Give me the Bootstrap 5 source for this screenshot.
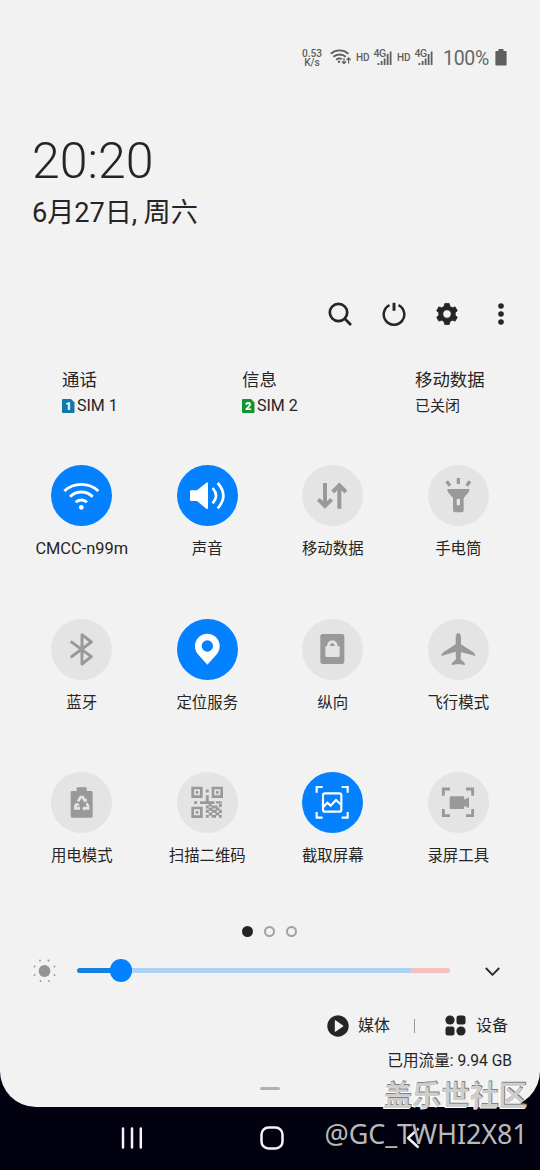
<!DOCTYPE html>
<html lang="zh-CN">
<head>
<meta charset="utf-8">
<meta name="viewport" content="width=device-width, initial-scale=1">
<title>快速设置面板</title>
<link href="https://cdn.jsdelivr.net/npm/bootstrap@5.3.0/dist/css/bootstrap.min.css" rel="stylesheet">
<style>
  body { font-family: Roboto, "Noto Sans CJK SC", sans-serif; background: #02010f; color: #252525; width: 540px; height: 1170px; overflow: hidden; }
  svg { display: block; flex: none; }
  .panel { height: 1107px; background: #f2f2f2; border-radius: 0 0 36px 36px; }
  .status { height: 116px; padding-right: 33px; color: #5e5e5e; fill: #5e5e5e; }
  .speed { font-size: 10.2px; line-height: 9.5px; font-weight: 500; width: 22px; margin-right: 7px; }
  .hd { font-size: 10px; font-weight: 500; line-height: 12px; width: 14px; margin: -1px 3px 0 0; }
  .pct { font-size: 19.5px; line-height: 24px; width: 47px; margin: 2px 5px 0 9px; font-weight: 400; letter-spacing: -.3px; color: #666; }
  .clock { height: 174px; padding: 15px 0 0 32px; }
  .time { font-size: 50px; line-height: 60px; font-weight: 300; }
  .date { font-size: 27.2px; line-height: 34px; margin-top: 5px; letter-spacing: -.1px; }
  .tools { height: 48px; padding-right: 30px; gap: 29.5px; }
  .sims { height: 127px; padding: 31px 0 0 62px; }
  .sims > div:nth-child(1) { width: 180px; }
  .sims > div:nth-child(2) { width: 173px; }
  .sim-name { font-size: 17.4px; line-height: 22px; }
  .sim-val { font-size: 16px; line-height: 22px; margin-top: 4px; gap: 2.5px; }
  .tiles { padding: 0 19px; }
  .tile { height: 153.5px; width: 25%; }
  .knob { width: 61px; height: 61px; border-radius: 50%; background: #e4e4e4; color: #999; --hole: #e4e4e4; }
  .knob.on { background: #0381fe; color: #fff; --hole: #0381fe; }
  .tile-name { font-size: 15.4px; line-height: 22px; margin-top: 12px; white-space: nowrap; }
  .pages { height: 11px; gap: 11px; padding-right: 1px; }
  .pages i { width: 11px; height: 11px; border-radius: 50%; border: 2px solid #a0a0a0; }
  .pages i.now { background: #252525; border-color: #252525; }
  .bright { height: 30px; margin-top: 19px; padding: 0 40px 0 32px; }
  .track { width: 373px; height: 4.6px; margin: 0 35px 0 20px; border-radius: 3px; background: linear-gradient(90deg, #1a80e0 0 43px, #aed0f2 43px 334px, #f3c2be 334px); }
  .thumb { width: 22.5px; height: 22.5px; border-radius: 50%; background: #0381fe; left: 32.5px; top: -9px; }
  .links { height: 24px; margin-top: 28px; padding-right: 32px; font-size: 16px; line-height: 24px; }
  .links span { padding-top: 1px; }
  .rule { width: 1px; height: 14px; background: #999; margin: 0 30px 0 24px; }
  .usage { font-size: 15.6px; line-height: 22px; padding-right: 28px; margin-top: 12.5px; }
  .handle { width: 20px; height: 2.5px; border-radius: 2px; background: #b0b0b0; margin: 15px auto 0; }
  .navbtns { height: 61px; padding-left: 121px; }
  .wm1, .wm2 { position: absolute; white-space: nowrap; }
  .wm1 { left: 383px; top: 1077px; font: bold 28.8px/34px "Noto Sans CJK SC", sans-serif; color: #cdcdcd; text-shadow: 1px -1px 0 #808080, -1px 1px 0 #fff, -1px -1px 1px #fff; }
  .wm2 { left: 324.500px; top: 1117px; font: 27px/34px "Noto Sans", sans-serif; letter-spacing: -.1px; color: #b9b9bd; text-shadow: 1px 1px 1px #000; }
</style>
</head>
<body class="position-relative">
<main class="panel">
  <div class="status d-flex align-items-center justify-content-end">
    <div class="speed text-center">0.53<br>K/s</div>
    <svg width="22" height="18" viewBox="0 0 22 18" class="me-1" fill="none" stroke="#5e5e5e" stroke-width="1.8"><path d="M.8 4.700A13.500 13.500 0 0 1 18.400 4.700M3.400 7.800A9.500 9.500 0 0 1 15.800 7.800M6.200 10.700A5 5 0 0 1 12 10.300"/><circle cx="9" cy="12.800" r="1.200" fill="#5e5e5e" stroke="none"/><path stroke-width="1.200" d="M14 9V14.500M12 12.500L14 14.700L16 12.500M18.600 14.500V9M16.600 11L18.600 8.800L20.600 11"/></svg>
    <div class="hd">HD</div>
    <svg width="20" height="26" viewBox="0 -4 20 26" class="me-1"><text x=".5" y="8" font-size="10.500" font-weight="500" letter-spacing="-.4">4G</text><path d="M4.500 14h1.800v2H4.500zM7.700 12h1.800v4H7.700zM10.700 9.500h1.800v6.500h-1.800zM13.700 5h1.800v11h-1.800zM16.700 2.500h1.800v13.500h-1.800z"/></svg>
    <div class="hd">HD</div>
    <svg width="20" height="26" viewBox="0 -4 20 26"><text x=".5" y="8" font-size="10.500" font-weight="500" letter-spacing="-.4">4G</text><path d="M4.500 14h1.800v2H4.500zM7.700 12h1.800v4H7.700zM10.700 9.500h1.800v6.500h-1.800zM13.700 5h1.800v11h-1.800zM16.700 2.500h1.800v13.500h-1.800z"/></svg>
    <div class="pct">100%</div>
    <svg width="12" height="17" viewBox="0 0 12 17" style="margin-top:-1px"><path d="M3.500 0h5v2H11q.6 0 .6.8V15.500q0 1-.8 1H1.200q-.8 0-.8-1V2.800q0-.8.8-.8h2.300z"/></svg>
  </div>

  <div class="clock">
    <div class="time">20:20</div>
    <div class="date">6月27日, 周六</div>
  </div>

  <div class="tools d-flex align-items-center justify-content-end">
    <svg width="24" height="24" viewBox="0 0 24 24" fill="none" stroke="#252525" stroke-width="2.700"><circle cx="10.500" cy="10.500" r="8.700"/><path d="M16.800 16.800L23 23"/></svg>
    <svg width="24" height="24" viewBox="0 0 24 24" fill="none" stroke="#252525" stroke-width="2.500"><path d="M7.500 3.200A10.300 10.300 0 1 0 16.500 3.200"/><path stroke-width="2.900" d="M12 .8V8.800"/></svg>
    <svg width="24" height="24" viewBox="0 0 24 24" fill="#252525"><path fill-rule="evenodd" stroke="#252525" stroke-width=".8" stroke-linejoin="round" d="M9.800 1.500H14.200L15 4.500L17.200 5.700L20.200 4.900L22.300 8.700L20.200 10.800V13.200L22.300 15.300L20.200 19.100L17.200 18.300L15 19.500L14.200 22.500H9.800L9 19.500L6.800 18.300L3.800 19.100L1.700 15.300L3.800 13.200V10.800L1.700 8.700L3.800 4.900L6.800 5.700L9 4.500ZM12 7.800A4.200 4.200 0 1 0 12 16.200A4.200 4.200 0 1 0 12 7.800Z"/></svg>
    <svg width="24" height="24" viewBox="0 0 24 24" style="margin-right:-2.5px" fill="#252525"><circle cx="12" cy="4" r="2.800"/><circle cx="12" cy="12" r="2.800"/><circle cx="12" cy="20" r="2.800"/></svg>
  </div>

  <div class="sims d-flex">
    <div>
      <div class="sim-name">通话</div>
      <div class="sim-val d-flex align-items-center"><svg width="12.500" height="14" viewBox="0 0 12.500 14" style="margin-top:-1px"><path fill="#0f78ad" d="M1 0H9L12.500 3.500V13Q12.500 14 11.500 14H1Q0 14 0 13V1Q0 0 1 0Z"/><text x="3.200" y="11" font-size="11" font-weight="900" fill="#fff">1</text></svg>SIM 1</div>
    </div>
    <div>
      <div class="sim-name">信息</div>
      <div class="sim-val d-flex align-items-center"><svg width="12.500" height="14" viewBox="0 0 12.500 14" style="margin-top:-1px"><path fill="#159230" d="M1 0H9L12.500 3.500V13Q12.500 14 11.500 14H1Q0 14 0 13V1Q0 0 1 0Z"/><text x="3" y="11" font-size="11" font-weight="900" fill="#fff">2</text></svg>SIM 2</div>
    </div>
    <div>
      <div class="sim-name">移动数据</div>
      <div class="sim-val" style="font-size:15px">已关闭</div>
    </div>
  </div>

  <div class="tiles d-flex flex-wrap">
    <div class="tile d-flex flex-column align-items-center">
      <svg class="knob on" viewBox="0 0 183 183" fill="none" stroke="currentColor" stroke-width="8.500"><path d="M40 78A76 76 0 0 1 142 78M57 95A48 48 0 0 1 125 95M74 112A24 24 0 0 1 108 112"/><circle cx="91" cy="127" r="7" fill="currentColor" stroke="none"/></svg>
      <div class="tile-name" style="font-size:16.4px">CMCC-n99m</div>
    </div>
    <div class="tile d-flex flex-column align-items-center">
      <svg class="knob on" viewBox="0 0 183 183"><path fill="currentColor" d="M42 76H60L88 53Q93 50 93 56V128Q93 134 88 131L60 108H42Q39 108 39 105V79Q39 76 42 76Z"/><path fill="none" stroke="currentColor" stroke-width="8" d="M107 69Q127 92 107 115M122 54Q156 92 122 130"/></svg>
      <div class="tile-name">声音</div>
    </div>
    <div class="tile d-flex flex-column align-items-center">
      <svg class="knob" viewBox="0 0 183 183" fill="none" stroke="currentColor" stroke-width="12"><path d="M69 54V122M49 103L69 123L89 103M112 131V62M92 81L112 61L132 81"/></svg>
      <div class="tile-name">移动数据</div>
    </div>
    <div class="tile d-flex flex-column align-items-center">
      <svg class="knob" viewBox="0 0 183 183"><path fill="currentColor" d="M60 72H122Q124 72 124 75Q124 80 120 84L107 99V136Q107 142 101 142H81Q75 142 75 136V99L62 84Q58 80 58 75Q58 72 60 72Z"/><path fill="var(--hole)" d="M86 102H96V121H86Z"/><path stroke="currentColor" stroke-width="9.500" d="M91 39V57M56 49L66 62M126 49L116 62"/></svg>
      <div class="tile-name">手电筒</div>
    </div>
    <div class="tile d-flex flex-column align-items-center">
      <svg class="knob" viewBox="0 0 183 183" fill="none" stroke="currentColor" stroke-width="9" stroke-linejoin="round"><path d="M59 67L121 113L93 135V47L121 69L59 115"/></svg>
      <div class="tile-name">蓝牙</div>
    </div>
    <div class="tile d-flex flex-column align-items-center">
      <svg class="knob on" viewBox="0 0 183 183"><path fill="currentColor" fill-rule="evenodd" d="M91 137L64 107C56 98 54 90 54 81A37 37 0 0 1 128 81C128 90 126 98 118 107ZM91 64A17 17 0 1 0 91 98A17 17 0 1 0 91 64Z"/></svg>
      <div class="tile-name">定位服务</div>
    </div>
    <div class="tile d-flex flex-column align-items-center">
      <svg class="knob" viewBox="0 0 183 183"><rect x="55" y="45" width="72" height="90" rx="7" fill="currentColor"/><rect x="70" y="81" width="43" height="33" rx="4" fill="var(--hole)"/><path fill="none" stroke="var(--hole)" stroke-width="9" d="M80 84V79A11 11 0 0 1 102 79V84"/></svg>
      <div class="tile-name">纵向</div>
    </div>
    <div class="tile d-flex flex-column align-items-center">
      <svg class="knob" viewBox="0 0 183 183"><path fill="currentColor" d="M91 42C95 42 99 48 99 56V76L136 100Q141 104 142 111L99 99L98 121L108 130Q111 133 111 138L91 135L71 138Q71 133 74 130L84 121L83 98L40 111Q41 104 46 100L83 76V56C83 48 87 42 91 42Z"/></svg>
      <div class="tile-name">飞行模式</div>
    </div>
    <div class="tile d-flex flex-column align-items-center">
      <svg class="knob" viewBox="0 0 183 183"><path fill="currentColor" d="M79 46H105Q107 46 107 48V57H121Q125 57 125 61V133Q125 137 121 137H63Q59 137 59 133V61Q59 57 63 57H77V48Q77 46 79 46Z"/><g fill="none" stroke="var(--hole)" stroke-width="8"><path d="M81 88L89 75H95L101 85"/><path d="M107 94L111 103V109H99"/><path d="M87 109H73V103L77 96"/></g><path fill="var(--hole)" d="M95 88L107 91L108 79ZM101 102V117L93 109ZM70 96L82 93L86 104Z"/></svg>
      <div class="tile-name">用电模式</div>
    </div>
    <div class="tile d-flex flex-column align-items-center">
      <svg class="knob" viewBox="0 0 183 183"><g fill="none" stroke="currentColor" stroke-width="8"><path d="M47 48H73V74H47ZM108 48H134V74H108ZM47 108H73V134H47Z"/></g><g fill="currentColor"><path d="M56 57H64V65H56ZM117 57H125V65H117ZM56 117H64V125H56Z"/><g transform="translate(43 44) scale(8.700)"><path d="M5 1h1v1h-1zM5 3h1v2h-1zM1 5h1v1h-1zM3 5h4v1h-4zM7 5h1v1h-1zM8.500 5h2v.8h-2zM5 6.500h1v1h-1zM6 5.800h1v1h-1zM7 6.500h2v1h-2zM9.500 6h1v1h-1zM6 7.300h1.300v1h-1.300zM8.500 7.200h1.200v1h-1.200zM5 8h1v1h-1zM7 8h1.700v1h-1.700zM9.500 8h1v1.200h-1zM6 8.900h1.200v1h-1.200zM8.300 8.900h1.300v1h-1.300zM5 9.800h1v.9h-1zM7 9.800h1.500v.9h-1.500zM9.500 9.800h1v.9h-1z"/></g></g></svg>
      <div class="tile-name">扫描二维码</div>
    </div>
    <div class="tile d-flex flex-column align-items-center">
      <svg class="knob on" viewBox="0 0 183 183" fill="none" stroke="currentColor" stroke-width="6.500"><path d="M44 62V45H62M119 45H137V62M137 120V137H119M62 137H44V120"/><rect x="63" y="64" width="55" height="55" rx="6"/><path d="M64 105L76 92L86 101L102 84L118 99"/></svg>
      <div class="tile-name">截取屏幕</div>
    </div>
    <div class="tile d-flex flex-column align-items-center">
      <svg class="knob" viewBox="0 0 183 183"><path fill="none" stroke="currentColor" stroke-width="8.500" d="M46 71V51H66M114 51H134V71M134 111V131H114M66 131H46V111"/><path fill="currentColor" d="M68 73H105Q109 73 109 77V83L120 77Q123 76 123 79V105Q123 108 120 107L109 101V107Q109 111 105 111H68Q65 111 65 107V77Q65 73 68 73Z"/></svg>
      <div class="tile-name">录屏工具</div>
    </div>
  </div>

  <div class="pages d-flex justify-content-center"><i class="now"></i><i></i><i></i></div>

  <div class="bright d-flex align-items-center">
    <svg width="25" height="25" viewBox="0 0 25 25" fill="#959595"><circle cx="12.500" cy="13" r="5.900"/><circle cx="8" cy="2.500" r=".9"/><circle cx="16.500" cy="2.500" r=".9"/><circle cx="2.500" cy="8.500" r=".9"/><circle cx="22.500" cy="8.500" r=".9"/><circle cx="2.500" cy="17" r=".9"/><circle cx="22.500" cy="17" r=".9"/><circle cx="8.500" cy="23" r=".9"/><circle cx="17" cy="23" r=".9"/></svg>
    <div class="track position-relative"><div class="thumb position-absolute"></div></div>
    <svg width="15" height="10" viewBox="0 0 15 10" fill="none" stroke="#252525" stroke-width="1.800"><path d="M.8 2L7.500 8.800L14.200 2"/></svg>
  </div>

  <div class="links d-flex align-items-center justify-content-end">
    <svg width="22" height="22" viewBox="0 0 22 22"><circle cx="11" cy="11" r="10.700" fill="#252525"/><path fill="#f2f2f2" d="M7.800 5.600Q7.800 5 8.500 5.300L16 10.400Q16.600 11 16 11.600L8.500 16.700Q7.800 17 7.800 16.400Z"/></svg>
    <span style="margin-left:9px">媒体</span>
    <div class="rule"></div>
    <svg width="21" height="21" viewBox="0 0 21 21" fill="#252525"><circle cx="5" cy="5" r="4.600"/><rect x="11.500" y=".5" width="9" height="9" rx="2.500"/><rect x=".5" y="11.500" width="9" height="9" rx="2.500"/><circle cx="16" cy="16" r="4.600"/></svg>
    <span style="margin-left:10px">设备</span>
  </div>
  <div class="usage text-end">已用流量: 9.94 GB</div>
  <div class="handle"></div>
</main>

<nav class="navbtns d-flex align-items-center">
  <svg width="22" height="22" viewBox="0 0 22 22" stroke="#f4f4f8" stroke-width="2.500" stroke-linecap="round"><path d="M2 1.500V20.500M11 1.500V20.500M19.800 1.500V20.500"/></svg>
  <svg width="24" height="24" viewBox="0 0 24 24" style="margin-left:117px" fill="none" stroke="#f4f4f8" stroke-width="2.500"><rect x="1.500" y="1.500" width="21" height="21" rx="7"/></svg>
  <svg width="14" height="22" viewBox="0 0 14 22" style="margin-left:122px" fill="none" stroke="#f4f4f8" stroke-width="2.500"><path d="M12.500 1.500L2 11L12.500 20.500"/></svg>
</nav>

<div class="wm1">盖乐世社区</div>
<div class="wm2">@GC_TWHI2X81</div>
<script src="https://cdn.jsdelivr.net/npm/bootstrap@5.3.0/dist/js/bootstrap.bundle.min.js"></script>
</body>
</html>
